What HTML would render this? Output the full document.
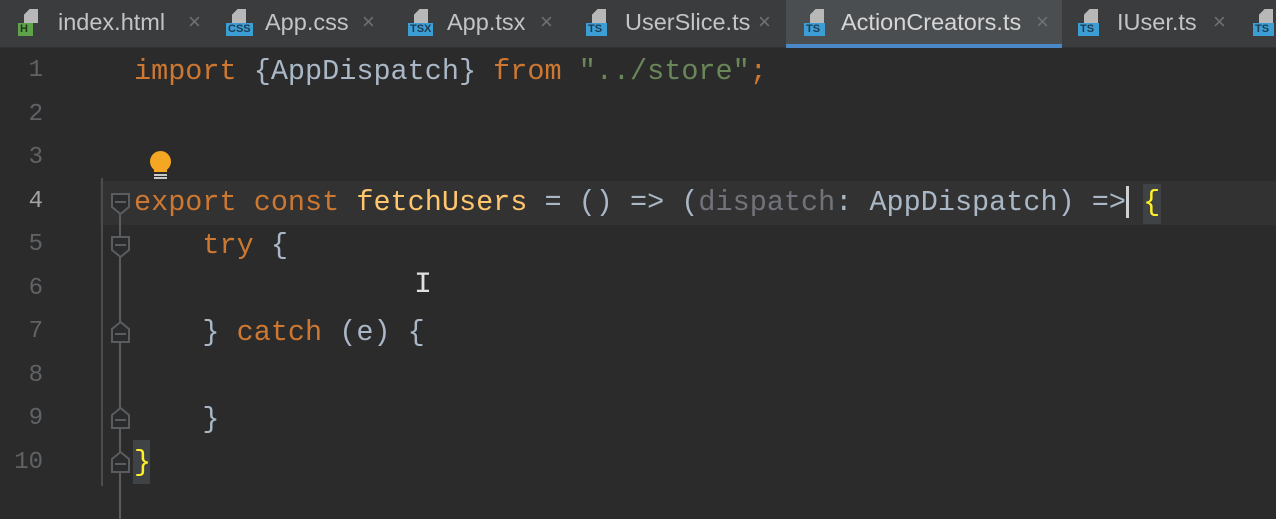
<!DOCTYPE html>
<html><head><style>
*{margin:0;padding:0;box-sizing:border-box}
body{width:1276px;height:519px;background:#2b2b2b;overflow:hidden;position:relative;font-family:"Liberation Sans",sans-serif}
.tabs{position:absolute;left:0;top:0;width:1276px;height:48px;background:#3a3c3e;border-bottom:1px solid #2f3133}
.tab{position:absolute;top:0;height:48px;color:#c4c4c4;font-size:23.5px;line-height:44px}
.act{background:#4b4e50;border-bottom:4px solid #4a88c7}
.ic{position:absolute;top:9px;width:28px;height:28px}
.ic .pg{position:absolute;left:6px;top:0;width:14px;height:14px;background:#b8b8b8;clip-path:polygon(40% 0,100% 0,100% 100%,0 100%,0 40%)}
.ic .lb{position:absolute;left:0;top:14px;height:13px;padding:0 2px;font-size:11px;line-height:13px;color:#1e3c52;font-weight:bold}
.x{position:absolute;top:0;color:#6f7275;font-size:22px}
.cur{position:absolute;left:100px;right:0;top:181px;height:44px;background:#323232}
.ln{position:absolute;left:0;width:60px;text-align:right;color:#606366;font-family:"Liberation Mono",monospace;font-size:24px;padding-right:17px}
.code{position:absolute;left:134px;font-family:"Liberation Mono",monospace;font-size:28.5px;color:#a9b7c6;white-space:pre;line-height:44px}
.k{color:#cc7832}.s{color:#6a8759}.f{color:#ffc66d}.p{color:#72737a}
</style></head><body>
<div class="tabs">
 <div class="tab" style="left:18px"><div class="ic"><div class="pg"></div><div class="lb" style="background:#5ea24a;color:#1e3a16">H&nbsp;</div></div><span style="position:absolute;left:40px">index.html</span><span class="x" style="left:170px">×</span></div>
 <div class="tab" style="left:226px"><div class="ic"><div class="pg"></div><div class="lb" style="background:#3c9ed4">CSS</div></div><span style="position:absolute;left:39px">App.css</span><span class="x" style="left:136px">×</span></div>
 <div class="tab" style="left:408px"><div class="ic"><div class="pg"></div><div class="lb" style="background:#3c9ed4">TSX</div></div><span style="position:absolute;left:39px">App.tsx</span><span class="x" style="left:132px">×</span></div>
 <div class="tab" style="left:586px"><div class="ic"><div class="pg"></div><div class="lb" style="background:#3c9ed4">TS&nbsp;</div></div><span style="position:absolute;left:39px;white-space:nowrap">UserSlice.ts</span><span class="x" style="left:172px">×</span></div>
 <div class="tab act" style="left:786px;width:276px"><div class="ic" style="left:18px"><div class="pg"></div><div class="lb" style="background:#3c9ed4">TS&nbsp;</div></div><span style="position:absolute;left:55px;white-space:nowrap;color:#d6d6d6">ActionCreators.ts</span><span class="x" style="left:250px">×</span></div>
 <div class="tab" style="left:1078px"><div class="ic"><div class="pg"></div><div class="lb" style="background:#3c9ed4">TS&nbsp;</div></div><span style="position:absolute;left:39px">IUser.ts</span><span class="x" style="left:135px">×</span></div>
 <div class="tab" style="left:1253px"><div class="ic"><div class="pg"></div><div class="lb" style="background:#3c9ed4">TS&nbsp;</div></div></div>
</div>
<div class="cur"></div>
<div style="position:absolute;left:101px;top:178px;width:2px;height:308px;background:#4a4d50"></div>
<svg style="position:absolute;left:0;top:0" width="200" height="519">
 <g stroke="#5a5d60" stroke-width="2" fill="#2b2b2b">
  <line x1="120" y1="212" x2="120" y2="519"/>
  <path d="M112 194H129V207L120.5 214L112 207Z"/><line x1="115" y1="202" x2="126" y2="202"/>
  <path d="M112 237H129V250L120.5 257L112 250Z"/><line x1="115" y1="245" x2="126" y2="245"/>
  <path d="M120.5 322L129 329V342H112V329Z"/><line x1="115" y1="334" x2="126" y2="334"/>
  <path d="M120.5 408L129 415V428H112V415Z"/><line x1="115" y1="420" x2="126" y2="420"/>
  <path d="M120.5 452L129 459V472H112V459Z"/><line x1="115" y1="464" x2="126" y2="464"/>
 </g>
</svg>
<div style="position:absolute;left:150px;top:151px;width:21px;height:21px;border-radius:50%;background:#f5a623"></div>
<div style="position:absolute;left:154px;top:168px;width:13px;height:4px;background:#f5a623"></div>
<div style="position:absolute;left:154px;top:174px;width:13px;height:2px;background:#c8c8c8"></div>
<div style="position:absolute;left:154px;top:177px;width:13px;height:2px;background:#c8c8c8"></div>
<div style="position:absolute;left:133px;top:440px;width:17px;height:44px;background:#3f4345"></div>
<div style="position:absolute;left:1143px;top:184px;width:18px;height:40px;background:#3f4345"></div>
<div style="position:absolute;left:1126px;top:186px;width:3px;height:32px;background:#d0d0d0"></div>
<div class="ln" style="top:57px">1</div>
<div class="ln" style="top:101px">2</div>
<div class="ln" style="top:144px">3</div>
<div class="ln" style="top:188px;color:#a4a3a3">4</div>
<div class="ln" style="top:231px">5</div>
<div class="ln" style="top:275px">6</div>
<div class="ln" style="top:318px">7</div>
<div class="ln" style="top:362px">8</div>
<div class="ln" style="top:405px">9</div>
<div class="ln" style="top:449px">10</div>
<div class="code" style="top:50px"><span class="k">import</span> {AppDispatch} <span class="k">from</span> <span class="s">"../store"</span><span class="k">;</span></div>
<div class="code" style="top:181px"><span class="k">export const</span> <span class="f">fetchUsers</span> = () =&gt; (<span class="p">dispatch</span>: AppDispatch) =&gt; <span style="color:#ffef28">{</span></div>
<div class="code" style="top:224px">    <span class="k">try</span> {</div>
<div class="code" style="top:311px">    } <span class="k">catch</span> (e) {</div>
<div class="code" style="top:398px">    }</div>
<div class="code" style="top:441px;color:#ffef28">}</div>
<div style="position:absolute;left:414px;top:270px;font-family:'Liberation Mono',monospace;font-size:30px;color:#e0e0e0;line-height:30px">I</div>
</body></html>
